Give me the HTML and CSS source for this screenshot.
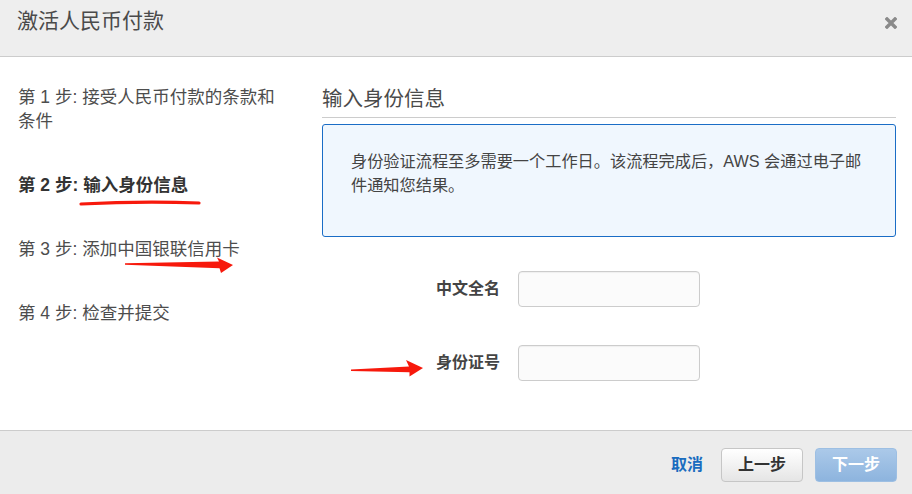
FILE: index.html
```html
<!DOCTYPE html>
<html lang="zh-CN">
<head>
<meta charset="utf-8">
<title>激活人民币付款</title>
<link rel="stylesheet" href="styles.css">
</head>
<body>
<div class="modal">
  <div class="modal-header">
    <h1 class="modal-title">激活人民币付款</h1>
    <button class="close" aria-label="关闭">
      <svg width="12" height="12" viewBox="0 0 12 12"><path d="M2 2L10 10M10 2L2 10" stroke="#8a8a8a" stroke-width="3.4" stroke-linecap="square"/></svg>
    </button>
  </div>
  <div class="modal-body">
    <ol class="steps">
      <li class="step">第 1 步: 接受人民币付款的条款和条件</li>
      <li class="step active">第 2 步: 输入身份信息</li>
      <li class="step">第 3 步: 添加中国银联信用卡</li>
      <li class="step">第 4 步: 检查并提交</li>
    </ol>
    <div class="content">
      <h2 class="section-title">输入身份信息</h2>
      <div class="info-box">
        <p>身份验证流程至多需要一个工作日。该流程完成后，AWS 会通过电子邮件通知您结果。</p>
      </div>
      <form class="form">
        <label class="form-label" for="name">中文全名</label>
        <input class="form-input" id="name" type="text">
        <label class="form-label" for="idnum">身份证号</label>
        <input class="form-input" id="idnum" type="text">
      </form>
    </div>
  </div>
  <div class="modal-footer">
    <a class="link-cancel" href="#">取消</a>
    <button class="btn btn-default">上一步</button>
    <button class="btn btn-primary" disabled>下一步</button>
  </div>
  <svg class="annotations" width="912" height="494" viewBox="0 0 912 494">
    <path d="M81 204 Q140 201 199 203" fill="none" stroke="#f7190c" stroke-width="3.2" stroke-linecap="round"/>
    <polygon points="125,263.3 219,261.6 217,257.5 233,265 221,273 219.5,268.3 125,264.8" fill="#f7190c"/>
    <polygon points="351,369.4 409,366.4 406,360 423,368 409.5,376.5 409.5,372.2 351,370.9" fill="#f7190c"/>
  </svg>
</div>
</body>
</html>
```

FILE: styles.css
```css
* { box-sizing: border-box; }

html, body {
  margin: 0;
  padding: 0;
  background: #fff;
}

body {
  font-family: "Liberation Sans", "Noto Sans CJK SC", sans-serif;
  color: #444;
}

.modal {
  position: relative;
  width: 912px;
  height: 494px;
  display: flex;
  flex-direction: column;
  overflow: hidden;
}

.modal-header {
  height: 57px;
  flex: none;
  background: #eeeeee;
  border-bottom: 1px solid #cccccc;
  display: flex;
  justify-content: space-between;
  align-items: flex-start;
  padding: 6px 15px 0 17px;
}

.modal-title {
  margin: 0;
  font-size: 21px;
  font-weight: normal;
  line-height: 30px;
  color: #4a4a4a;
}

.close {
  border: 0;
  background: none;
  padding: 0;
  margin-top: 11px;
  width: 12px;
  height: 12px;
  display: flex;
  cursor: pointer;
}

.modal-body {
  flex: 1;
  display: flex;
  padding: 28px 16px 0 18px;
}

.steps {
  list-style: none;
  margin: 0;
  padding: 0;
  width: 266px;
  flex: none;
}

.step {
  font-size: 17.5px;
  line-height: 24px;
  color: #4d4d4d;
  margin-bottom: 40px;
}

.step.active {
  font-weight: bold;
  color: #333;
}

.content {
  margin-left: 38px;
  flex: 1;
}

.section-title {
  margin: 0;
  font-size: 20.5px;
  font-weight: normal;
  line-height: 28px;
  color: #4a4a4a;
  padding-bottom: 4px;
  border-bottom: 1px solid #cccccc;
}

.info-box {
  margin-top: 6px;
  border: 1px solid #1a6dc6;
  border-radius: 3px;
  background: #f0f7fe;
  padding: 24px 20px 39px 28px;
}

.info-box p {
  margin: 0;
  font-size: 16.2px;
  line-height: 24px;
  color: #444;
}

.form {
  margin-top: 34px;
  display: grid;
  grid-template-columns: 178px 182px;
  column-gap: 18px;
  row-gap: 38px;
  align-items: center;
}

.form-label {
  text-align: right;
  font-size: 16px;
  font-weight: bold;
  color: #444;
  line-height: 20px;
}

.form-input {
  height: 36px;
  width: 182px;
  border: 1px solid #cccccc;
  border-radius: 4px;
  background: #fbfbfb;
  box-shadow: inset 0 1px 1px rgba(0, 0, 0, 0.05);
  font: inherit;
  padding: 0 8px;
  margin: 0;
}

.modal-footer {
  height: 64px;
  flex: none;
  background: #ececec;
  border-top: 1px solid #cccccc;
  display: flex;
  justify-content: flex-end;
  align-items: flex-start;
  padding: 17px 15px 0 0;
}

.link-cancel {
  font-size: 16px;
  font-weight: bold;
  color: #1a6cbf;
  text-decoration: none;
  line-height: 34px;
  margin-right: 18px;
}

.btn {
  height: 34px;
  width: 82px;
  padding: 0;
  border-radius: 4px;
  font-family: inherit;
  font-size: 16px;
  font-weight: bold;
  line-height: 32px;
  cursor: pointer;
}

.btn-default {
  border: 1px solid #c6c6c6;
  background: linear-gradient(#ffffff, #e5e5e5);
  color: #333;
}

.btn-primary {
  margin-left: 12px;
  border: 1px solid #9dbfe3;
  background: linear-gradient(#abc9e9, #8db4de);
  color: #ffffff;
}

.annotations {
  position: absolute;
  left: 0;
  top: 0;
  pointer-events: none;
}
```
